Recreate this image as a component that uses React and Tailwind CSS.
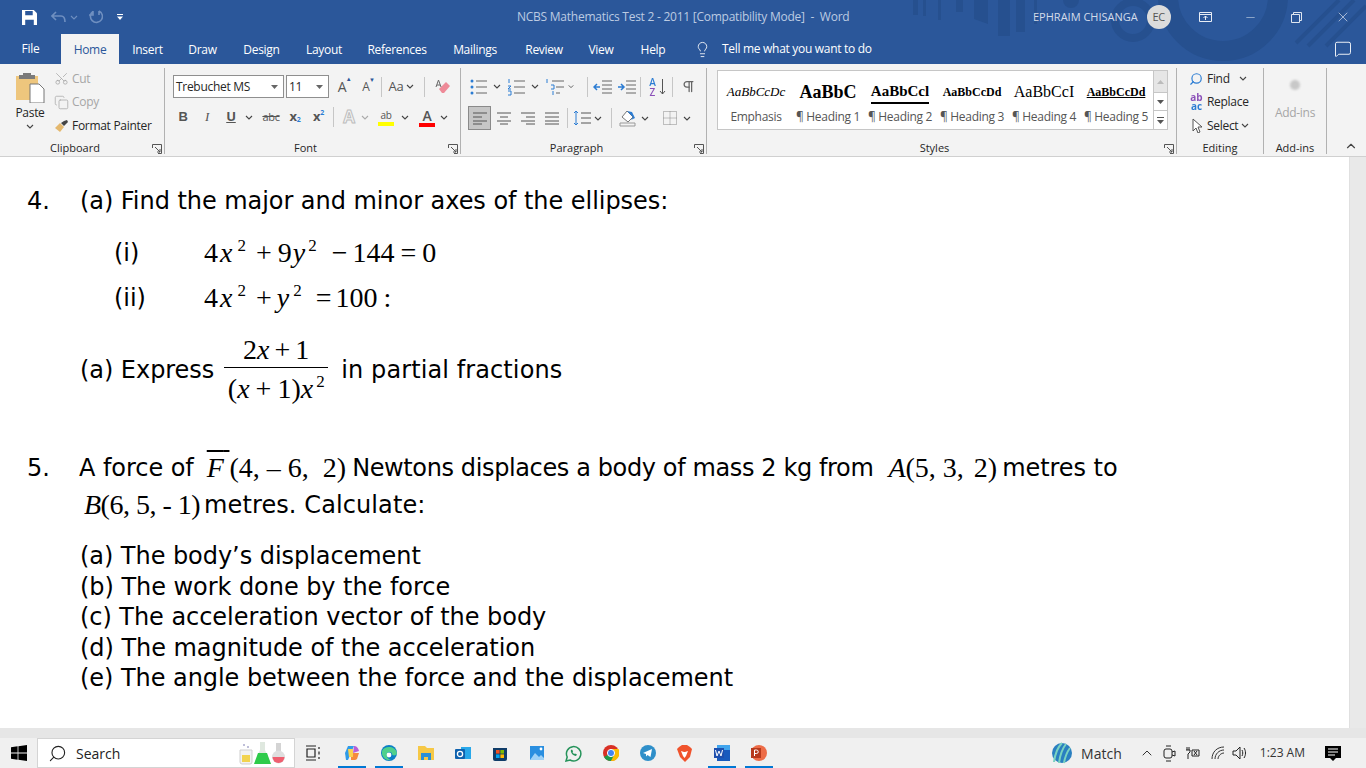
import { ChevronUp, Copy, Lightbulb, MessageSquare, Minus, Pilcrow, Scissors, Search, X } from 'lucide-react'
import React from 'react'

const Chev = ({ className = 'text-[#444]' }) => (
  <svg width="8" height="5" viewBox="0 0 8 5" className={className}>
    <path d="M1 1l3 3 3-3" fill="none" stroke="currentColor" strokeWidth="1.1" />
  </svg>
)

const Launcher = () => (
  <svg width="10" height="10" viewBox="0 0 10 10" className="text-[#555]">
    <path d="M.5 4V.5h9v9H6M3 3l5 5M8 5v3H5" fill="none" stroke="currentColor" />
  </svg>
)

const Divider = ({ className = 'h-[24px]' }) => <div className={`w-px shrink-0 bg-[#c6c6c6] ${className}`} />

const Cell = ({ className = 'w-[24px]', children }) => (
  <div className={`flex h-[24px] shrink-0 items-center justify-center ${className}`}>{children}</div>
)

const Group = ({ className, label, launcher, children }) => (
  <div className={`relative flex h-[86px] shrink-0 flex-col border-r border-[#b1b1b1] ${className}`}>
    <div className="h-[72px] min-h-0">{children}</div>
    <div className={`flex h-[14px] items-center justify-center text-[11px] leading-none tracking-normal text-[#262626] ${launcher ? 'pr-[14px]' : ''}`}>{label}</div>
    {launcher && (
      <div className="absolute right-[2px] bottom-[0px]">
        <Launcher />
      </div>
    )}
  </div>
)

const Lines = ({ d, color = '#555', children }) => (
  <svg width="20" height="18" viewBox="0 0 20 18">
    <path d={d} fill="none" stroke={color} strokeWidth="1" />
    {children}
  </svg>
)

const StyleItem = ({ sample, label, sampleClass }) => (
  <div className="flex w-[72px] shrink-0 flex-col items-center">
    <div className={`flex h-[34px] w-[72px] items-center justify-center overflow-hidden whitespace-nowrap [font-family:'Liberation_Serif',serif] tracking-normal text-black ${sampleClass}`}>
      {sample}
    </div>
    <div className="text-[12px] leading-[16px] whitespace-nowrap text-[#555]">{label}</div>
  </div>
)

const Tab = ({ children, active, className = '' }) => (
  <div className={`flex h-[30px] shrink-0 items-center justify-center text-[12px] ${active ? 'bg-[#f3f3f3] text-[#2b579a]' : 'text-white'} ${className}`}>
    <span className="mt-[2px]">{children}</span>
  </div>
)

const Ribbon = () => (
  <div className="flex h-[93px] shrink-0 border-b border-[#d0d0d0] bg-[#f3f3f3] pt-[4px] pb-[3px] text-[#262626]">
    <Group className="w-[165px]" label="Clipboard" launcher>
      <div className="flex h-full">
        <div className="flex w-[54px] flex-col items-center pt-[3px] pl-[6px]">
          <svg width="30" height="32" viewBox="0 0 30 32">
            <path d="M1 5h22v24H1z" fill="#eec67d" />
            <path d="M8 2h8v2h4v4H4V4h4z" fill="#7a7a7a" />
            <path d="M15 13h9l5 5v14H15z" fill="#fff" stroke="#777" />
          </svg>
          <div className="mt-[2px] text-[12px] leading-[16px]">Paste</div>
          <div className="mt-[3px]">
            <Chev />
          </div>
        </div>
        <div className="-mt-[1px] flex flex-col text-[12px]">
          <div className="flex h-[23.5px] items-center gap-[3px] text-[#a6a6a6]">
            <Scissors size={15} strokeWidth={1.2} className="-rotate-90" />
            Cut
          </div>
          <div className="flex h-[23.5px] items-center gap-[3px] text-[#a6a6a6]">
            <Copy size={15} strokeWidth={1.2} />
            Copy
          </div>
          <div className="flex h-[23px] items-center gap-[3px] whitespace-nowrap">
            <svg width="15" height="14" viewBox="0 0 15 14">
              <path d="M1 9l5-5 4 4-4 5z" fill="#e4b86e" />
              <path d="M7 4l3-2 3-1 1 2-3 3-1 1z" fill="#444" />
            </svg>
            Format Painter
          </div>
        </div>
      </div>
    </Group>

    <Group className="w-[296px]" label="Font" launcher>
      <div className="flex flex-col pt-[7px] pl-[8px]">
        <div className="flex h-[23px] items-center">
          <div className="flex h-[23px] w-[111px] shrink-0 items-center justify-between border border-[#8f8f8f] bg-white pr-[5px] pl-[2px] text-[12px]">
            Trebuchet MS
            <svg width="7" height="4" viewBox="0 0 7 4"><path d="M0 0h7L3.5 4z" fill="#666" /></svg>
          </div>
          <div className="ml-[2px] flex h-[23px] w-[43px] shrink-0 items-center justify-between border border-[#8f8f8f] bg-white pr-[5px] pl-[2px] text-[12px]">
            11
            <svg width="7" height="4" viewBox="0 0 7 4"><path d="M0 0h7L3.5 4z" fill="#666" /></svg>
          </div>
          <Cell className="ml-[1px] w-[24px]">
            <span className="relative text-[14px] text-[#555]">A<span className="absolute -top-[1px] -right-[5px] text-[6px] text-[#2b579a]">▲</span></span>
          </Cell>
          <Cell className="w-[24px]">
            <span className="relative text-[12px] text-[#555]">A<span className="absolute -top-[2px] -right-[5px] text-[6px] text-[#2b579a]">▼</span></span>
          </Cell>
          <Divider className="ml-[3px] h-[20px]" />
          <Cell className="ml-[4px] w-[20px] text-[13px] text-[#555]">Aa</Cell>
          <Chev />
          <Divider className="ml-[10px] h-[20px]" />
          <Cell className="ml-[7px] w-[22px]">
            <svg width="16" height="16" viewBox="0 0 16 16">
              <path d="M7 14l-3-4 7-7 4 4-6 7z" fill="#ee8a98" />
              <path d="M1 8l2.500-7L6 8M2 6h3" fill="none" stroke="#666" />
            </svg>
          </Cell>
        </div>
        <div className="mt-[7px] flex h-[24px] items-center text-[13px] text-[#555]">
          <Cell className="-ml-[2px] w-[24px] [font-family:'Liberation_Sans',sans-serif] font-bold">B</Cell>
          <Cell className="w-[24px] [font-family:'Liberation_Serif',serif] italic">I</Cell>
          <Cell className="w-[24px] font-bold underline">U</Cell>
          <Cell className="w-[12px]"><Chev /></Cell>
          <Cell className="ml-[4px] w-[24px] text-[11px] line-through">abc</Cell>
          <Cell className="w-[24px] font-bold">x<span className="mt-[7px] text-[7px] text-[#2b7cd3]">2</span></Cell>
          <Cell className="w-[23px] font-bold">x<span className="-mt-[7px] text-[7px] text-[#2b7cd3]">2</span></Cell>
          <Divider className="ml-[3px] h-[20px]" />
          <Cell className="ml-[3px] w-[24px] text-[17px] font-bold text-transparent [-webkit-text-stroke:1px_#bdbdbd]">A</Cell>
          <Cell className="w-[8px]"><Chev className="text-[#aaa]" /></Cell>
          <Cell className="ml-[5px] w-[24px] flex-col">
            <span className="h-[14px] text-[10px] leading-[14px]">ab</span>
            <span className="h-[4px] w-[16px] bg-[#ffff00]" />
          </Cell>
          <Cell className="ml-[1px] w-[12px]"><Chev /></Cell>
          <Cell className="ml-[4px] w-[24px] flex-col">
            <span className="h-[15px] text-[14px] leading-[15px] font-semibold">A</span>
            <span className="h-[4px] w-[16px] bg-[#ff0000]" />
          </Cell>
          <Cell className="w-[10px]"><Chev /></Cell>
        </div>
      </div>
    </Group>

    <Group className="w-[246px]" label="Paragraph" launcher>
      <div className="flex flex-col pt-[7px] pl-[7px]">
        <div className="flex h-[23px] items-center">
          <Cell className="w-[22px]">
            <Lines color="#666" d="M7 3h11M7 9h11M7 15h11">
              <circle cx="3" cy="3" r="1.5" fill="#2b7cd3" />
              <circle cx="3" cy="9" r="1.5" fill="#2b7cd3" />
              <circle cx="3" cy="15" r="1.5" fill="#2b7cd3" />
            </Lines>
          </Cell>
          <Cell className="w-[14px]"><Chev /></Cell>
          <Cell className="ml-[2px] w-[22px]">
            <Lines color="#666" d="M7 3h11M7 9h11M7 15h11">
              <path d="M2 1v4M1 8h3l-3 3h3M1 13h3v4H1" fill="none" stroke="#2b7cd3" />
            </Lines>
          </Cell>
          <Cell className="w-[14px]"><Chev /></Cell>
          <Cell className="w-[26px]">
            <Lines color="#666" d="M7 3h12M11 9h8M11 15h4">
              <path d="M2 1v4M6 7h3v4H6M8 13v4" fill="none" stroke="#2b7cd3" />
            </Lines>
          </Cell>
          <Cell className="w-[6px]"><Chev /></Cell>
          <Divider className="ml-[13px] h-[20px]" />
          <Cell className="ml-[3px] w-[24px]">
            <Lines color="#666" d="M9 3h10M9 7h10M9 11h10M9 15h10">
              <path d="M7 9H1M4 6L1 9l3 3" fill="none" stroke="#2b7cd3" strokeWidth="1.500" />
            </Lines>
          </Cell>
          <Cell className="w-[24px]">
            <Lines color="#666" d="M9 3h10M9 7h10M9 11h10M9 15h10">
              <path d="M1 9h6M4 6l3 3-3 3" fill="none" stroke="#2b7cd3" strokeWidth="1.500" />
            </Lines>
          </Cell>
          <Divider className="ml-[1px] h-[20px]" />
          <Cell className="ml-[4px] w-[24px]">
            <span className="w-[8px] bg-[linear-gradient(#2b7cd3_50%,#8a4fb8_50%)] bg-clip-text text-center text-[10px] leading-[10px] font-semibold tracking-normal break-all text-transparent">AZ</span>
            <svg width="7" height="18" viewBox="0 0 7 18" className="ml-[2px]"><path d="M3.500 1v15M1 13l2.500 3L6 13" fill="none" stroke="#555" /></svg>
          </Cell>
          <Divider className="ml-[3px] h-[20px]" />
          <Cell className="ml-[3px] w-[24px]"><Pilcrow size={15} className="text-[#666]" /></Cell>
        </div>
        <div className="mt-[8px] flex h-[24px] items-center">
          <Cell className="box-border w-[23px] border border-[#8a8a8a] bg-[#c6c6c6]"><Lines d="M3 4h14M3 8h9M3 12h14M3 15h9" /></Cell>
          <Cell className="ml-[1px] w-[24px]"><Lines d="M3 4h14M6 8h8M3 12h14M6 15h8" /></Cell>
          <Cell className="w-[24px]"><Lines d="M3 4h14M8 8h9M3 12h14M8 15h9" /></Cell>
          <Cell className="w-[24px]"><Lines d="M3 4h14M3 8h14M3 12h14M3 15h14" /></Cell>
          <Divider className="ml-[3px] h-[20px]" />
          <Cell className="ml-[3px] w-[22px]">
            <Lines d="M9 4h10M9 9h10M9 14h10">
              <path d="M4 2v14M2 4l2-2 2 2M2 14l2 2 2-2" fill="none" stroke="#2b7cd3" />
            </Lines>
          </Cell>
          <Cell className="w-[10px]"><Chev /></Cell>
          <Divider className="ml-[8px] h-[20px]" />
          <Cell className="ml-[4px] w-[24px]">
            <svg width="18" height="18" viewBox="0 0 18 18">
              <path d="M3 8l5-6 6 6-5 5z" fill="#fff" stroke="#777" />
              <path d="M8 2l6 6-2 3 4-2-3-6z" fill="#2b7cd3" />
              <path d="M1 14h15v3H1z" fill="none" stroke="#999" />
            </svg>
          </Cell>
          <Cell className="w-[10px]"><Chev /></Cell>
          <Cell className="ml-[8px] w-[24px]">
            <svg width="14" height="14" viewBox="0 0 14 14">
              <path d="M.5.5h13v13H.5zM7 .5v13M.5 7h13" fill="none" stroke="#888" strokeDasharray="1 1" />
            </svg>
          </Cell>
          <Cell className="w-[10px]"><Chev /></Cell>
        </div>
      </div>
    </Group>

    <Group className="w-[470px]" label="Styles" launcher>
      <div className="mt-[2px] ml-[10px] flex h-[60px] w-[451px] border border-[#c6c6c6] bg-white">
        <div className="flex flex-1 pt-[4px] pl-[2px]">
          <StyleItem label="Emphasis" sample="AaBbCcDc" sampleClass="text-[13px] italic" />
          <StyleItem label="¶ Heading 1" sample="AaBbC" sampleClass="text-[18px] font-bold" />
          <StyleItem label="¶ Heading 2" sample={<span className="border-b-2 border-black">AaBbCcl</span>} sampleClass="text-[15px] font-bold" />
          <StyleItem label="¶ Heading 3" sample="AaBbCcDd" sampleClass="text-[12px] font-bold" />
          <StyleItem label="¶ Heading 4" sample="AaBbCcI" sampleClass="text-[16px]" />
          <StyleItem label="¶ Heading 5" sample={<span className="underline">AaBbCcDd</span>} sampleClass="text-[12px] font-bold" />
        </div>
        <div className="flex w-[14px] shrink-0 flex-col border-l border-[#c6c6c6]">
          <div className="flex h-[21px] items-center justify-center bg-[#e6e6e6]">
            <svg width="7" height="4" viewBox="0 0 7 4"><path d="M0 4h7L3.500 0z" fill="#bbb" /></svg>
          </div>
          <div className="flex h-[19px] items-center justify-center border-y border-[#c6c6c6]">
            <svg width="7" height="4" viewBox="0 0 7 4"><path d="M0 0h7L3.500 4z" fill="#555" /></svg>
          </div>
          <div className="flex flex-1 items-center justify-center">
            <svg width="7" height="7" viewBox="0 0 7 7"><path d="M0 0h7v1H0zM0 3h7L3.500 7z" fill="#555" /></svg>
          </div>
        </div>
      </div>
    </Group>

    <Group className="w-[87px]" label="Editing">
      <div className="-mt-[1px] flex flex-col pl-[12px] text-[12px]">
        <div className="flex h-[23.5px] items-center gap-[4px]">
          <Search size={14} strokeWidth={2} className="-scale-x-100 text-[#2b7cd3]" />
          Find
          <span className="ml-[5px]"><Chev /></span>
        </div>
        <div className="flex h-[23.5px] items-center gap-[3px]">
          <span className="w-[15px] bg-[linear-gradient(#8a4fb8_50%,#2b7cd3_50%)] bg-clip-text text-center text-[10px] leading-[9px] font-bold tracking-normal break-all text-transparent">abac</span>
          Replace
        </div>
        <div className="flex h-[23px] items-center gap-[3px] pl-[3px]">
          <svg width="12" height="15" viewBox="0 0 12 15"><path d="M1 1l9 8H6l2 5-2 1-2-5-3 3z" fill="#fff" stroke="#555" /></svg>
          Select
          <Chev />
        </div>
      </div>
    </Group>

    <Group className="w-[63px]" label="Add-ins">
      <div className="flex flex-col items-center pt-[7px] text-[12px] text-[#a6a6a6]">
        <div className="mt-[5px] h-[10px] w-[10px] rounded-full bg-[#c8c8c8] blur-[1px]" />
        <div className="mt-[14px]">Add-ins</div>
      </div>
    </Group>

    <div className="flex flex-1 items-end justify-center pl-[8px]">
      <ChevronUp size={14} className="text-[#444]" />
    </div>
  </div>
)

const Serif = ({ className = '', children }) => (
  <span className={`[font-family:'Liberation_Serif',serif] text-[28px] tracking-normal ${className}`}>{children}</span>
)

const Sup = ({ className = 'ml-[5px]' }) => <span className={`relative -top-[11px] text-[17px] leading-none ${className}`}>2</span>

const Op = ({ className, children }) => <span className={className}>{children}</span>

const I = ({ className = '', children }) => <i className={className}>{children}</i>

const SubItem = ({ children }) => <div className="flex h-[30.5px] items-center">{children}</div>

const Document = () => (
  <div className="flex min-h-0 flex-1">
    <div className="flex-1 overflow-hidden bg-white pl-[27px] [font-family:'DejaVu_Sans',sans-serif] text-[24px] tracking-[-0.05px] text-black">
      <div className="mt-[26px] flex h-[36px] items-center">
        <span className="w-[53px] shrink-0">4.</span>
        (a) Find the major and minor axes of the ellipses:
      </div>
      <div className="mt-[14px] flex h-[40px] items-center pl-[87px]">
        <span className="w-[90px]">(i)</span>
        <Serif>
          4<I className="ml-[2px]">x</I><Sup />
          <Op className="mr-[6px] ml-[10px]">+</Op>9<I className="ml-[1px]">y</I><Sup className="ml-[3px]" />
          <Op className="mr-[5px] ml-[15px]">−</Op>144<Op className="mx-[6px]">=</Op>0
        </Serif>
      </div>
      <div className="mt-[5px] flex h-[40px] items-center pl-[87px]">
        <span className="w-[90px]">(ii)</span>
        <Serif>
          4<I className="ml-[2px]">x</I><Sup />
          <Op className="mr-[5px] ml-[10px]">+</Op><I>y</I><Sup className="ml-[4px]" />
          <Op className="mr-[4px] ml-[14px]">=</Op>100<Op className="ml-[6px]">:</Op>
        </Serif>
      </div>
      <div className="mt-[14px] flex h-[76px] items-center pl-[53px] whitespace-pre">
        (a) Express
        <div className="mr-[13px] ml-[10px] flex w-[104px] flex-col items-center">
          <Serif className="h-[38px] w-full border-b border-black text-center leading-[40px]">2<I>x</I><Op className="mx-[5px]">+</Op>1</Serif>
          <Serif className="leading-[42px]">(<I>x</I><Op className="mx-[6px]">+</Op>1)<I>x</I><Sup className="ml-[3px]" /></Serif>
        </div>
        <span className="tracking-[0.1px]">in partial fractions</span>
      </div>
      <div className="mt-[42px] flex h-[36px] items-center whitespace-pre">
        <span className="w-[52px] shrink-0">5.</span>
        A force of
        <Serif className="mr-[6px] ml-[13px]"><span className="overline"><I>F</I>{'\u2009'}</span>(4, – 6,  2)</Serif>
        <span className="tracking-[-0.38px]">Newtons displaces a body of mass 2 kg from</span>
        <Serif className="mr-[5px] ml-[15px]"><I>A</I>(5, 3,<span className="ml-[10px]">2)</span></Serif>
        metres to
      </div>
      <div className="flex h-[37px] items-center pl-[57px] whitespace-pre">
        <Serif className="mr-[4px]"><span className="tracking-[-0.5px]"><I>B</I>(6, 5, - 1)</span></Serif>
        <span className="tracking-[0.1px]">metres. Calculate:</span>
      </div>
      <div className="mt-[18px] pl-[53px]">
        <SubItem>(a) The body’s displacement</SubItem>
        <SubItem>(b) The work done by the force</SubItem>
        <SubItem>(c) The acceleration vector of the body</SubItem>
        <SubItem>(d) The magnitude of the acceleration</SubItem>
        <SubItem>(e) The angle between the force and the displacement</SubItem>
      </div>
    </div>
    <div className="w-[17px] shrink-0 border-l border-[#e0e0e0] bg-[#e9e9e9]" />
  </div>
)

const TaskIcon = ({ running, className = '', children }) => (
  <div className={`relative flex h-[30px] w-[37px] shrink-0 items-center justify-center ${className}`}>
    {children}
    {running && <div className="absolute right-[4px] bottom-0 left-[5px] h-[2px] bg-[#0078d4]" />}
  </div>
)

const Taskbar = () => (
  <div className="flex h-[30px] shrink-0 items-center bg-[#f0f0f0]">
    <div className="flex w-[37px] justify-center">
      <svg width="16" height="16" viewBox="0 0 16 16" fill="#000">
        <path d="M0 2.2l6.6-.9v6.3H0zM7.4 1.2L16 0v7.6H7.4zM0 8.4h6.6v6.3L0 13.800zM7.4 8.4H16V16l-8.6-1.2z" />
      </svg>
    </div>
    <div className="flex h-[30px] w-[258px] items-center border border-[#d4d4d4] bg-white pl-[10px] text-[14px] tracking-normal text-[#222]">
      <Search size={19} strokeWidth={1.4} className="-scale-x-100" />
      <span className="ml-[9px] flex-1">Search</span>
      <svg width="50" height="24" viewBox="0 0 50 24" className="mr-[7px]">
        <path d="M3 9h12v12a2 2 0 0 1-2 2H5a2 2 0 0 1-2-2z" fill="#f2f2f2" stroke="#cfcfcf" />
        <path d="M5 14h8v7H5z" fill="#f2d34f" />
        <circle cx="7" cy="4" r="1" fill="#aac" />
        <circle cx="11" cy="6" r="1" fill="#aac" />
        <path d="M23 1h5v8l6 14H17l6-14z" fill="#dfe8df" />
        <path d="M21 12h9l4 11H17z" fill="#2ecb4a" />
        <path d="M39 2h5v8h-5z" fill="#d4d4d4" />
        <circle cx="41.500" cy="16" r="6.500" fill="#dfdfdf" />
        <path d="M35.500 16h12a6 6 0 0 1-12 0z" fill="#ef5f70" />
      </svg>
    </div>
    <div className="-ml-[1px] flex items-center">
      <TaskIcon>
        <svg width="16" height="16" viewBox="0 0 16 16" fill="none" stroke="#222" strokeWidth="1.2">
          <path d="M1 1h10M1 15h10M2 4h8v8H2zM14 2v2M14 6.500v3M14 12v2" />
        </svg>
      </TaskIcon>
      <TaskIcon running className="ml-[2px]">
        <svg width="16" height="16" viewBox="0 0 16 16">
          <path d="M4 1h6L7 8 4 15H2L1 8z" fill="#2f9be8" />
          <path d="M10 1c2 0 4 1 5 5l-6 2z" fill="#b85fd8" />
          <path d="M7 8h8l-2 6c-1 1-2 1-6 1z" fill="#f58b3c" />
          <path d="M4 4h5v8H5z" fill="#fbd24e" />
        </svg>
      </TaskIcon>
      <TaskIcon running>
        <svg width="16" height="16" viewBox="0 0 16 16">
          <circle cx="8" cy="8" r="8" fill="#0c7fc6" />
          <path d="M1 6c2-5 13-6 15 2 0 3-5 3-5 1 0-2-4-3-5 0-1 2 1 5 4 6-5 1-10-3-9-9z" fill="#4fd08c" />
          <circle cx="8" cy="10" r="2.400" fill="#fff" />
        </svg>
      </TaskIcon>
      <TaskIcon>
        <svg width="16" height="14" viewBox="0 0 16 14">
          <path d="M0 0h7l2 2h7v12H0z" fill="#f6c846" />
          <path d="M3 7h10v7h-3v-3H6v3H3z" fill="#2a8fd8" />
        </svg>
      </TaskIcon>
      <TaskIcon>
        <svg width="16" height="16" viewBox="0 0 16 16">
          <path d="M6 2h10v12H6z" fill="#28a8ea" />
          <rect x="0" y="4" width="10" height="10" rx="1" fill="#0f62ae" />
          <circle cx="5" cy="9" r="2.600" fill="none" stroke="#fff" strokeWidth="1.300" />
        </svg>
      </TaskIcon>
      <TaskIcon>
        <svg width="16" height="16" viewBox="0 0 16 16">
          <path d="M1 3h14v11a2 2 0 0 1-2 2H3a2 2 0 0 1-2-2z" fill="#103c68" />
          <path d="M4 5h3.600v3.600H4z" fill="#f25022" />
          <path d="M8.400 5H12v3.600H8.400z" fill="#7fba00" />
          <path d="M4 9.400h3.600V13H4z" fill="#00a4ef" />
          <path d="M8.400 9.400H12V13H8.400z" fill="#ffb900" />
        </svg>
      </TaskIcon>
      <TaskIcon>
        <svg width="16" height="16" viewBox="0 0 16 16">
          <path d="M1 1h14v14H1z" fill="#2a8fe0" />
          <path d="M1 15l5-7 4 4 2-2 3 3v2z" fill="#9fd2f7" />
          <circle cx="12" cy="4" r="1.400" fill="#fff" />
        </svg>
      </TaskIcon>
      <TaskIcon>
        <svg width="17" height="17" viewBox="0 0 17 17" fill="none">
          <path d="M1 16l1.200-4A7.200 7.200 0 1 1 5 15z" stroke="#25935a" strokeWidth="1.500" />
          <path d="M6 5c-1 2 2 6 5 6l1-1.500-2-1-1 .6-1.500-1.800.6-1L7 4.500z" fill="#25935a" />
        </svg>
      </TaskIcon>
      <TaskIcon>
        <svg width="16" height="16" viewBox="0 0 16 16">
          <circle cx="8" cy="8" r="8" fill="#d93025" />
          <path d="M8 8L1 12a8 8 0 0 0 7 4l4-4z" fill="#1e9a4b" />
          <path d="M8 4h7.400a8 8 0 0 1-7.400 12l4-8z" fill="#fbbc04" />
          <circle cx="8" cy="8" r="3.600" fill="#4285f4" stroke="#fff" />
        </svg>
      </TaskIcon>
      <TaskIcon>
        <svg width="16" height="16" viewBox="0 0 16 16">
          <circle cx="8" cy="8" r="8" fill="#2f8fc9" />
          <path d="M3 8l9-4-1.500 8-3-2-1.500 1.500V9z" fill="#fff" />
        </svg>
      </TaskIcon>
      <TaskIcon>
        <svg width="15" height="17" viewBox="0 0 15 17">
          <path d="M2 2l3-2h5l3 2 2 2-2 8-5 5-5-5-3-8z" fill="#f0532c" />
          <path d="M4 6l3 1h1l3-1-2 5-1.500 2L6 11z" fill="#fff" />
        </svg>
      </TaskIcon>
      <TaskIcon running>
        <svg width="16" height="16" viewBox="0 0 16 16">
          <path d="M3 0h13v16H3z" fill="#185abd" />
          <path d="M3 0h13v5H3z" fill="#41a5ee" />
          <rect x="0" y="3" width="10" height="10" fill="#1e4fae" />
          <path d="M1.500 5l1.500 6 2-5 2 5 1.500-6" fill="none" stroke="#fff" />
        </svg>
      </TaskIcon>
      <TaskIcon running>
        <svg width="16" height="16" viewBox="0 0 16 16">
          <circle cx="8" cy="8" r="8" fill="#ed6c47" />
          <rect x="0" y="3" width="10" height="10" fill="#b7391c" />
          <path d="M3.500 11V5h2a1.700 1.700 0 0 1 0 3.500h-2" fill="none" stroke="#fff" />
        </svg>
      </TaskIcon>
    </div>
    <div className="flex-1" />
    <div className="flex items-center tracking-normal text-[#333]">
      <svg width="21" height="22" viewBox="0 0 21 22" className="mr-[9px]">
        <circle cx="11" cy="11" r="10" fill="#2a7fc0" />
        <path d="M3 20C4 12 7 5 11 1M8 21c1-8 3-14 7-19M13 21c1-6 3-11 6-15" stroke="#7ad3c0" strokeWidth="2" fill="none" />
      </svg>
      <span className="text-[14px]">Match</span>
      <ChevronUp size={16} strokeWidth={1.5} className="ml-[17px]" />
      <svg width="13" height="17" viewBox="0 0 13 17" fill="none" stroke="#222" className="ml-[8px]">
        <rect x="1" y="4" width="8" height="9" rx="2" />
        <path d="M9 7l3-1v5l-3-1M3 1h5M3 16h5" />
      </svg>
      <svg width="16" height="12" viewBox="0 0 16 12" fill="none" stroke="#222" className="ml-[9px]">
        <path d="M2 0v3M4 0v3M1 3h4v2l-2 2v5M7 3h7v6H7zM9 4l3 4M12 4L9 8" />
      </svg>
      <svg width="14" height="14" viewBox="0 0 14 14" fill="none" stroke="#333" className="ml-[10px]">
        <path d="M1 13C1 6 6 1 13 1M4 13c0-5 4-9 9-9M7 13c0-3 3-6 6-6" />
      </svg>
      <svg width="16" height="14" viewBox="0 0 16 14" fill="none" stroke="#222" className="ml-[7px]">
        <path d="M1 5h3l4-4v12L4 9H1zM10 4c1 2 1 4 0 6M12 2c2 3 2 7 0 10" />
      </svg>
      <span className="ml-[12px] text-[12px]">1:23 AM</span>
      <div className="mr-[25px] ml-[20px]">
        <svg width="16" height="15" viewBox="0 0 16 15">
          <path d="M0 0h16v12h-5l-3 3-3-3H0z" fill="#000" />
          <path d="M3 3h10M3 6h10M3 9h7" stroke="#fff" />
        </svg>
      </div>
    </div>
  </div>
)

export default function App() {
  return (
    <div className="flex h-[768px] w-[1366px] flex-col overflow-hidden bg-white [font-family:'Open_Sans',sans-serif] tracking-[-0.3px]">
      <div className="relative h-[64px] shrink-0 overflow-hidden bg-[#2b579a]">
        <svg width="460" height="64" viewBox="0 0 460 64" className="absolute top-0 left-[906px] text-[#26508f]" fill="currentColor">
          <path d="M7 0h5v15H7zM17 0h3v16h-3zM32 0h3v20h-3zM50 0h7v12h-7zM68 0h14v24l-14-5zM92 0h12v36H92zM110 0h9v32h-9zM128 0h3v24h-3z" />
          <circle cx="165" cy="0" r="8" />
          <circle cx="227" cy="20" r="18" fill="none" stroke="currentColor" strokeWidth="8" />
          <circle cx="317" cy="-4" r="55" fill="none" stroke="currentColor" strokeWidth="20" />
          <path d="M390 43L433 0M402 46l46-46M420 46l40-40" stroke="currentColor" strokeWidth="4" />
        </svg>
        <div className="relative flex h-[34px] items-center">
          <div className="flex shrink-0 items-center">
            <svg width="15" height="15" viewBox="0 0 14 14" className="ml-[22px]">
              <path d="M0 0h11l3 3v11H0z" fill="#fff" />
              <path d="M3 1h7v4H3zM3 9h8v5H3z" fill="#2b579a" />
            </svg>
            <svg width="16" height="12" viewBox="0 0 16 12" fill="none" stroke="#6f8fc0" strokeWidth="1.600" className="ml-[14px]">
              <path d="M5 1L1 5l4 4M1 5h9c3 0 4 2 4 6" />
            </svg>
            <span className="ml-[3px]"><Chev className="text-[#6f8fc0]" /></span>
            <svg width="14" height="14" viewBox="0 0 14 14" fill="none" stroke="#6f8fc0" strokeWidth="1.600" className="ml-[11px]">
              <path d="M10 1a6 6 0 1 1-6 .5M10 1v4M4 1v4H0" />
            </svg>
            <svg width="6" height="6" viewBox="0 0 6 6" className="ml-[14px]" fill="#fff">
              <path d="M0 0h6v1H0zM0 2.500h6L3 6z" />
            </svg>
          </div>
          <div className="ml-[394px] w-[332px] shrink-0 text-[12px] tracking-[-0.25px] whitespace-pre text-[#bccbe2]">NCBS Mathematics Test 2 - 2011 [Compatibility Mode]  -  Word</div>
          <div className="ml-[184px] text-[11px] tracking-normal text-[#d3dcea]">EPHRAIM CHISANGA</div>
          <div className="ml-[9px] flex h-[24px] w-[24px] items-center justify-center rounded-full bg-[#dcdcdc] text-[11px] text-[#555]">EC</div>
          <div className="ml-[22px] flex w-[26px] justify-center">
            <svg width="13" height="10" viewBox="0 0 13 10" fill="none" stroke="#e8edf5"><path d="M.5.5h12v9H.5zM.5 2.500h12M6.500 8V4M4.500 6l2-2 2 2" /></svg>
          </div>
          <Minus size={13} strokeWidth={1} className="ml-[25px] text-[#dfe6f0]" />
          <svg width="11" height="11" viewBox="0 0 11 11" fill="none" stroke="#dfe6f0" className="ml-[34px]">
            <path d="M.5 2.500h8v8h-8zM2.500 2.500v-2h8v8h-2" />
          </svg>
          <X size={16} strokeWidth={1} className="ml-[33px] text-[#dfe6f0]" />
        </div>
        <div className="relative flex h-[30px] items-center">
          <Tab className="w-[61px] -translate-y-[1px]">File</Tab>
          <Tab active className="w-[58px]">Home</Tab>
          <Tab className="w-[57px]">Insert</Tab>
          <Tab className="w-[53px]">Draw</Tab>
          <Tab className="w-[65px]">Design</Tab>
          <Tab className="w-[60px]">Layout</Tab>
          <Tab className="w-[86px]">References</Tab>
          <Tab className="w-[70px]">Mailings</Tab>
          <Tab className="w-[68px]">Review</Tab>
          <Tab className="w-[46px]">View</Tab>
          <Tab className="w-[58px]">Help</Tab>
          <Lightbulb size={17} strokeWidth={1.2} className="ml-[12px] text-white" />
          <span className="ml-[11px] text-[12px] font-medium text-white">Tell me what you want to do</span>
          <div className="flex-1" />
          <MessageSquare size={18} strokeWidth={1.2} className="mr-[14px] text-white" />
        </div>
      </div>
      <Ribbon />
      <Document />
      <div className="h-[10px] shrink-0 bg-[#e6e6e6]" />
      <Taskbar />
    </div>
  )
}
